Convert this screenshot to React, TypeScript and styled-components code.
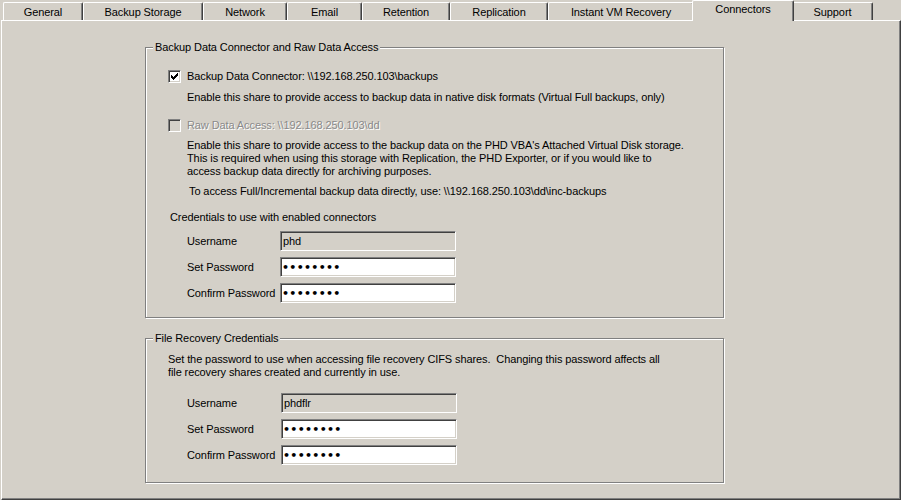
import styled, { createGlobalStyle } from 'styled-components';

const GlobalStyle = createGlobalStyle`
  html, body {
    margin: 0;
    padding: 0;
    background: #d4d0c8;
  }
  body {
    font-family: 'Liberation Sans', Arial, sans-serif;
    font-size: 11px;
    letter-spacing: -0.1px;
    color: #000;
  }
`;

interface tabItem {
  label: string;
  width: number;
}

const tabs: tabItem[] = [
  { label: 'General', width: 80 },
  { label: 'Backup Storage', width: 120 },
  { label: 'Network', width: 84 },
  { label: 'Email', width: 75 },
  { label: 'Retention', width: 88 },
  { label: 'Replication', width: 98 },
  { label: 'Instant VM Recovery', width: 146 },
  { label: 'Connectors', width: 98 },
  { label: 'Support', width: 81 },
];

const ACTIVE_TAB = 'Connectors';

const CheckMark = () => (
  <svg width="7" height="7" viewBox="0 0 7 7" shapeRendering="crispEdges">
    <path
      d="M0 2h1v3H0z M1 3h1v3H1z M2 4h1v3H2z M3 3h1v3H3z M4 2h1v3H4z M5 1h1v3H5z M6 0h1v3H6z"
      fill="#000"
    />
  </svg>
);

interface checkProps {
  checked?: boolean;
  disabled?: boolean;
  label: string;
}

const CheckOption = ({ checked, disabled, label }: checkProps) => (
  <CheckRow>
    <CheckBox $disabled={disabled}>{checked && <CheckMark />}</CheckBox>
    <CheckLabel $disabled={disabled}>{label}</CheckLabel>
  </CheckRow>
);

interface credentialProps {
  username: string;
  labelWidth: number;
  gap: number;
}

const CredentialForm = ({ username, labelWidth, gap }: credentialProps) => (
  <Form $labelWidth={labelWidth} $gap={gap}>
    <FieldLabel>Username</FieldLabel>
    <TextField $readonly value={username} readOnly />
    <FieldLabel>Set Password</FieldLabel>
    <PasswordField type="password" value="password" readOnly />
    <FieldLabel>Confirm Password</FieldLabel>
    <PasswordField type="password" value="password" readOnly />
  </Form>
);

export default function App() {
  return (
    <>
      <GlobalStyle />
      <Window>
        <TabStrip>
          {tabs.map((tab) => (
            <Tab key={tab.label} $width={tab.width} $active={tab.label === ACTIVE_TAB}>
              {tab.label}
            </Tab>
          ))}
        </TabStrip>
        <Panel>
          <GroupBox>
            <Legend>Backup Data Connector and Raw Data Access</Legend>
            <CheckOption checked label={'Backup Data Connector: \\\\192.168.250.103\\backups'} />
            <Hint $gap={8}>
              Enable this share to provide access to backup data in native disk formats (Virtual Full backups, only)
            </Hint>
            <Spacer $h={15} />
            <CheckOption disabled label={'Raw Data Access: \\\\192.168.250.103\\dd'} />
            <Hint $gap={7}>
              Enable this share to provide access to the backup data on the PHD VBA's Attached Virtual Disk storage.
              <br />
              This is required when using this storage with Replication, the PHD Exporter, or if you would like to
              <br />
              access backup data directly for archiving purposes.
            </Hint>
            <Hint $gap={7} $indent={21}>
              {'To access Full/Incremental backup data directly, use: \\\\192.168.250.103\\dd\\inc-backups'}
            </Hint>
            <Hint $gap={13} $indent={2}>
              Credentials to use with enabled connectors
            </Hint>
            <CredentialForm username="phd" labelWidth={93} gap={7} />
          </GroupBox>

          <GroupBox $last>
            <Legend>File Recovery Credentials</Legend>
            <Hint $gap={0} $indent={0}>
              Set the password to use when accessing file recovery CIFS shares.&nbsp; Changing this password affects all
              <br />
              file recovery shares created and currently in use.
            </Hint>
            <CredentialForm username="phdflr" labelWidth={94} gap={14} />
          </GroupBox>
        </Panel>
      </Window>
    </>
  );
}

const Window = styled.div`
  width: 901px;
  height: 500px;
  display: flex;
  flex-direction: column;
  background: #d4d0c8;
  overflow: hidden;
`;

const TabStrip = styled.div`
  display: flex;
  align-items: flex-start;
  height: 20px;
  padding-left: 3px;
  flex-shrink: 0;
`;

const Tab = styled.div<{ $width: number; $active?: boolean }>`
  box-sizing: border-box;
  width: ${({ $width, $active }) => ($active ? $width + 4 : $width)}px;
  height: ${({ $active }) => ($active ? 21 : 18)}px;
  margin: ${({ $active }) => ($active ? '0 -2px' : '2px 0 0')};
  padding-top: ${({ $active }) => ($active ? 0 : 1)}px;
  position: relative;
  z-index: ${({ $active }) => ($active ? 2 : 0)};
  background: #d4d0c8;
  border-top: 1px solid #fff;
  border-left: 1px solid #fff;
  border-right: 1px solid #404040;
  border-radius: 2px 2px 0 0;
  box-shadow: inset -1px 0 0 #808080;
  text-align: center;
  line-height: 16px;
  white-space: nowrap;
  color: #000;
`;

const Panel = styled.div`
  flex: 1;
  box-sizing: border-box;
  margin-left: 1px;
  border-top: 1px solid #fff;
  border-left: 1px solid #fff;
  border-right: 1px solid #404040;
  border-bottom: 1px solid #404040;
  box-shadow: inset -1px -1px 0 #808080;
  padding: 26px 0 0 143px;
  display: flex;
  flex-direction: column;
  align-items: flex-start;
`;

const GroupBox = styled.div<{ $last?: boolean }>`
  position: relative;
  box-sizing: border-box;
  width: 579px;
  margin-top: ${({ $last }) => ($last ? 20 : 0)}px;
  padding: ${({ $last }) => ($last ? '14px 0 17px 22px' : '22px 0 14px 22px')};
  border: 1px solid #808080;
  box-shadow: inset 1px 1px 0 #fff, 1px 1px 0 #fff;
  display: flex;
  flex-direction: column;
  align-items: flex-start;
`;

const Legend = styled.span`
  position: absolute;
  top: -7px;
  left: 7px;
  padding: 0 2px;
  line-height: 13px;
  background: #d4d0c8;
  white-space: nowrap;
`;

const CheckRow = styled.div`
  display: flex;
  align-items: center;
  gap: 6px;
  height: 13px;
`;

const CheckBox = styled.span<{ $disabled?: boolean }>`
  box-sizing: border-box;
  width: 13px;
  height: 13px;
  display: flex;
  align-items: center;
  justify-content: center;
  border-style: solid;
  border-width: 1px;
  border-color: #808080 #fff #fff #808080;
  box-shadow: inset 1px 1px 0 #404040, inset -1px -1px 0 #d4d0c8;
  background: ${({ $disabled }) => ($disabled ? '#d4d0c8' : '#fff')};
`;

const CheckLabel = styled.span<{ $disabled?: boolean }>`
  line-height: 13px;
  white-space: nowrap;
  color: ${({ $disabled }) => ($disabled ? '#8a8a8a' : '#000')};
  text-shadow: ${({ $disabled }) => ($disabled ? '1px 1px 0 #fff' : 'none')};
`;

const Hint = styled.div<{ $gap: number; $indent?: number }>`
  margin-top: ${({ $gap }) => $gap}px;
  margin-left: ${({ $indent }) => ($indent === undefined ? 19 : $indent)}px;
  line-height: 13px;
  white-space: nowrap;
`;

const Spacer = styled.div<{ $h: number }>`
  height: ${({ $h }) => $h}px;
`;

const Form = styled.div<{ $labelWidth: number; $gap: number }>`
  display: grid;
  grid-template-columns: ${({ $labelWidth }) => $labelWidth}px 176px;
  grid-auto-rows: 20px;
  row-gap: 6px;
  margin: ${({ $gap }) => $gap}px 0 0 19px;
  align-items: center;
`;

const FieldLabel = styled.span`
  line-height: 13px;
  white-space: nowrap;
`;

const TextField = styled.input<{ $readonly?: boolean }>`
  box-sizing: border-box;
  width: 176px;
  height: 20px;
  margin: 0;
  padding: 0 0 0 2px;
  border-style: solid;
  border-width: 1px;
  border-color: #808080 #fff #fff #808080;
  box-shadow: inset 1px 1px 0 #404040, inset -1px -1px 0 #d4d0c8;
  background: ${({ $readonly }) => ($readonly ? '#d4d0c8' : '#fff')};
  font-family: 'Liberation Sans', Arial, sans-serif;
  font-size: 11px;
  letter-spacing: -0.1px;
  color: #000;
  outline: none;
`;

const PasswordField = styled(TextField)`
  font-family: 'DejaVu Sans', sans-serif;
  font-size: 11px;
  font-weight: bold;
  letter-spacing: 0.3px;
  padding-left: 1px;
`;
